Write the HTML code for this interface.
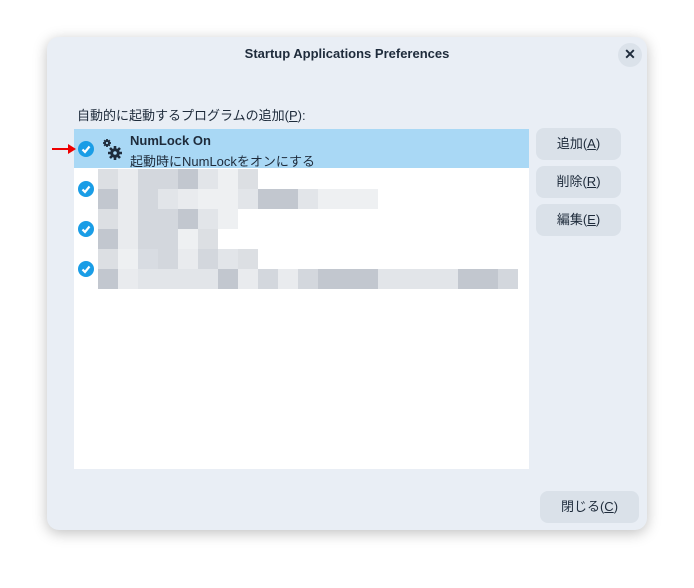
<!DOCTYPE html>
<html><head><meta charset="utf-8"><style>
body{margin:0;width:694px;height:588px;background:#fff;font-family:"Liberation Sans","Noto Sans CJK JP",sans-serif;position:relative;overflow:hidden}
.dlg{position:absolute;left:47px;top:37px;width:600px;height:493px;background:#e9eef5;border-radius:12px;box-shadow:0 3px 14px rgba(0,0,0,.25)}
.title{position:absolute;left:0;right:0;top:46px;text-align:center;font-weight:bold;font-size:13px;color:#1e2b3b}
.x{position:absolute;left:618px;top:43px;width:24px;height:24px;border-radius:12px;background:#dbe2ea;text-align:center;line-height:23px;font-weight:bold;font-size:14px;color:#1e2b3b}
.lbl{position:absolute;left:77px;top:105px;font-size:13px;color:#1e2b3b}
.list{position:absolute;left:74px;top:129px;width:455px;height:340px;background:#fff;overflow:hidden}
.sel{position:absolute;left:0;top:0;width:455px;height:39px;background:#a9d8f5}
.chk{position:absolute;width:16px;height:16px;border-radius:8px;background:#1a9de6}
.chk svg{position:absolute;left:0;top:0}
.btn{position:absolute;left:536px;width:85px;height:32px;border-radius:8px;background:#dae1e9;text-align:center;line-height:32px;font-size:13px;color:#1e2b3b}
.p{position:absolute;width:20px;height:20px}
.t{position:absolute;font-size:13px;color:#1e2b3b}
</style></head><body>
<div class="dlg"></div>
<div class="title">Startup Applications Preferences</div>
<div class="x">✕</div>
<div class="lbl">自動的に起動するプログラムの追加(<u>P</u>):</div>
<div class="list"><div class="sel"></div></div>
<svg style="position:absolute;left:51px;top:143px" width="26" height="12"><path d="M1 6H20" stroke="#e00" stroke-width="2"/><path d="M17 1L25 6L17 11Z" fill="#e00"/></svg>
<div class="chk" style="left:78px;top:141px"><svg width="16" height="16"><path d="M4.5 8.5L7 11L11.5 5.5" stroke="#fff" stroke-width="2.2" fill="none"/></svg></div>
<div class="chk" style="left:78px;top:181px"><svg width="16" height="16"><path d="M4.5 8.5L7 11L11.5 5.5" stroke="#fff" stroke-width="2.2" fill="none"/></svg></div>
<div class="chk" style="left:78px;top:221px"><svg width="16" height="16"><path d="M4.5 8.5L7 11L11.5 5.5" stroke="#fff" stroke-width="2.2" fill="none"/></svg></div>
<div class="chk" style="left:78px;top:261px"><svg width="16" height="16"><path d="M4.5 8.5L7 11L11.5 5.5" stroke="#fff" stroke-width="2.2" fill="none"/></svg></div>
<svg style="position:absolute;left:102px;top:138px" width="22" height="24" viewBox="0 0 22 24">
<g fill="#1e2b3b">
<g stroke="#1e2b3b" stroke-width="1.8"><path d="M5 1V9M1 5H9M2.2 2.2L7.8 7.8M7.8 2.2L2.2 7.8"/></g><circle cx="5" cy="5" r="3"/><circle cx="5" cy="5" r="1.1" fill="#a9d8f5"/>
<g stroke="#1e2b3b" stroke-width="2.6"><path d="M13 8V22M6 15H20M8 10L18 20M18 10L8 20"/></g><circle cx="13" cy="15" r="4.8"/><circle cx="13" cy="15" r="1.8" fill="#a9d8f5"/></g></svg>
<div class="t" style="left:130px;top:133px;font-weight:bold">NumLock On</div>
<div class="t" style="left:130px;top:151px">起動時にNumLockをオンにする</div>
<div id="px"></div>
<div class="btn" style="top:128px">追加(<u>A</u>)</div>
<div class="btn" style="top:166px">削除(<u>R</u>)</div>
<div class="btn" style="top:204px">編集(<u>E</u>)</div>
<div class="btn" style="left:540px;top:491px;width:99px">閉じる(<u>C</u>)</div>
<script>
var rows=[[169,"01223450"],[189,"81241554334555"],[209,"0122345"],[229,"812250"],[249,"05621240"],[269,"814444312123334444332"]];
var cols=["#dcdfe3","#e9ebee","#d3d7dd","#c2c7cf","#e2e5e9","#eef0f2","#d8dce2","#f4f5f6","#c2c7cf"];
var h="";
rows.forEach(function(r){for(var j=0;j<r[1].length;j++){h+='<div class="p" style="left:'+(98+j*20)+'px;top:'+r[0]+'px;background:'+cols[+r[1][j]]+'"></div>';}});
document.getElementById("px").innerHTML=h;
</script>
</body></html>
